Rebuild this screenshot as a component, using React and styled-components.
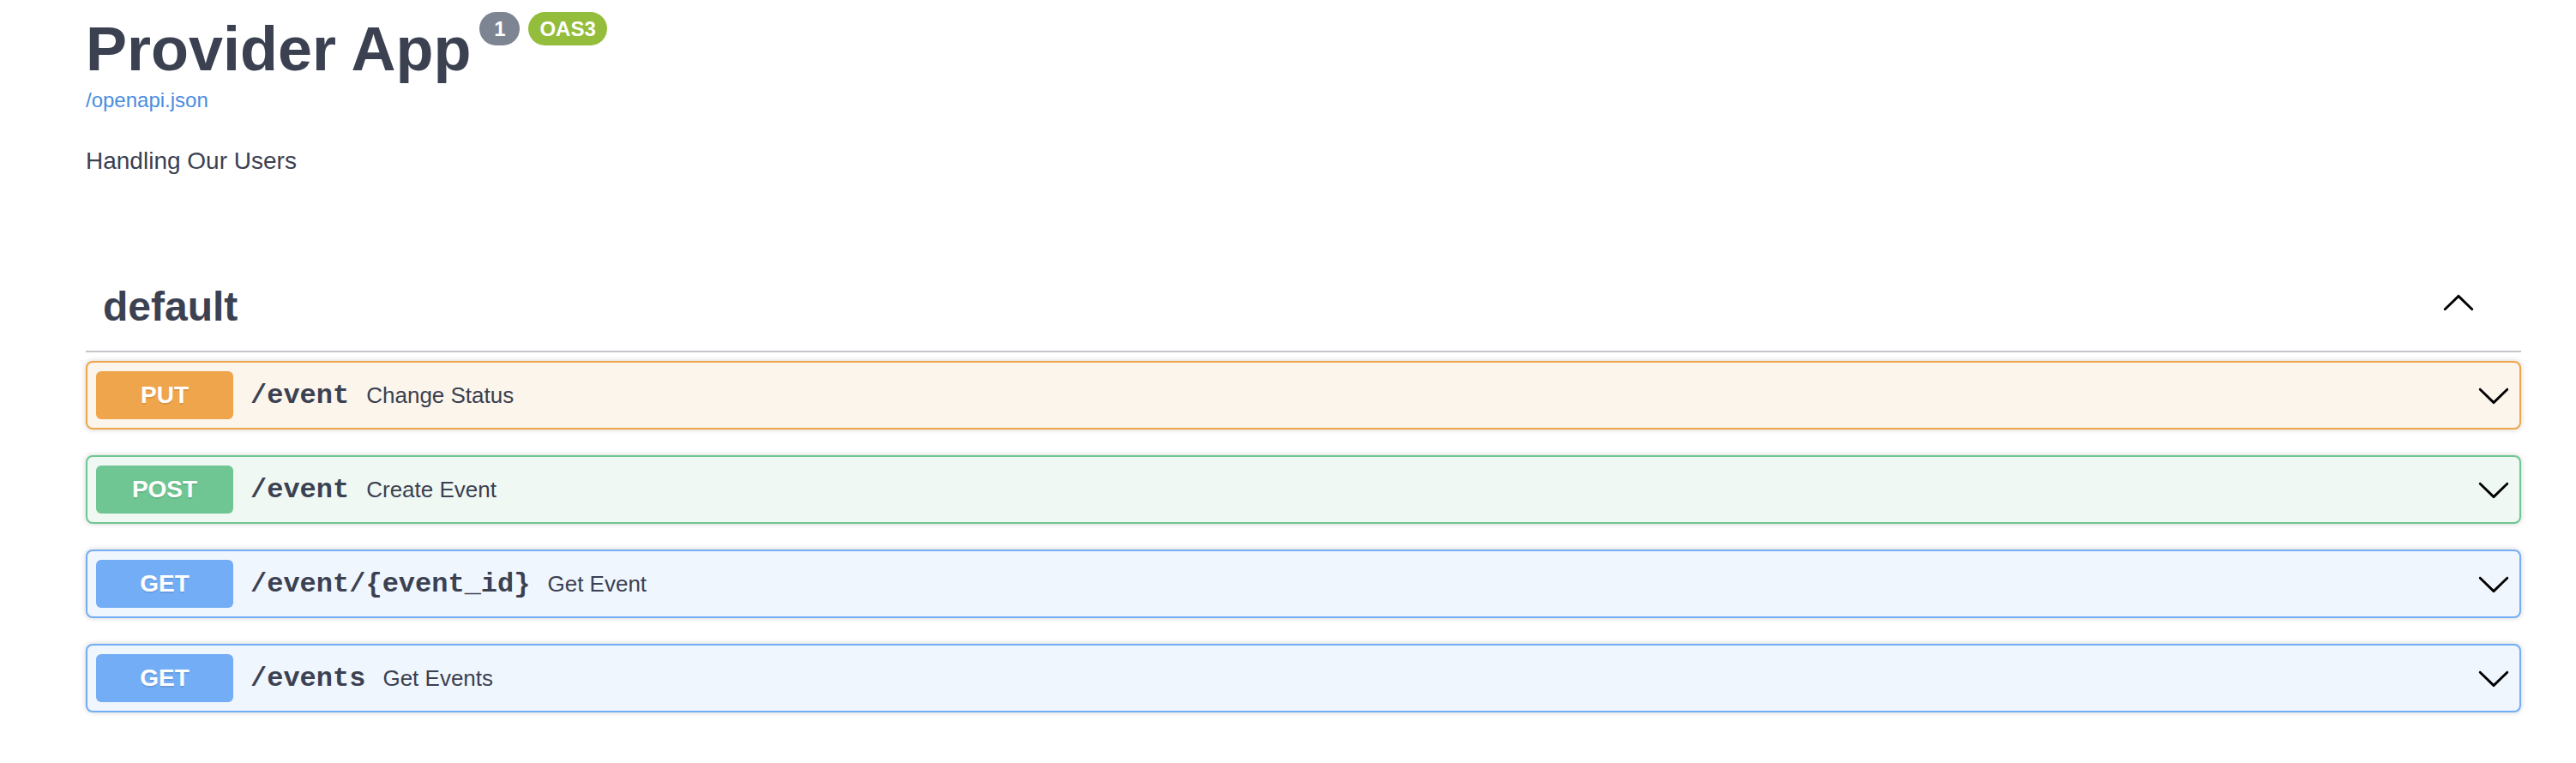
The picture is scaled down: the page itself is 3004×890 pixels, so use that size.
import React from 'react';
import styled, { createGlobalStyle } from 'styled-components';

const GlobalStyle = createGlobalStyle`
  html, body {
    margin: 0;
    padding: 0;
    background: #fff;
  }
  body {
    font-family: "Liberation Sans", Arial, sans-serif;
    color: #3b4151;
  }
`;

const METHODS = {
  PUT: { main: '#efa54b', bg: '#fcf5ec' },
  POST: { main: '#6fc692', bg: '#eff8f3' },
  GET: { main: '#73adf6', bg: '#f0f6fe' },
};

const operations = [
  { method: 'PUT', path: '/event', summary: 'Change Status' },
  { method: 'POST', path: '/event', summary: 'Create Event' },
  { method: 'GET', path: '/event/{event_id}', summary: 'Get Event' },
  { method: 'GET', path: '/events', summary: 'Get Events' },
];

const Page = styled.div`
  padding: 14px 64px 40px 100px;
  width: 2840px;
`;

const Info = styled.div`
  margin-bottom: 105px;
`;

const TitleRow = styled.div`
  display: flex;
  align-items: flex-start;
`;

const Title = styled.h2`
  margin: 2px 0 0 0;
  font-size: 72px;
  line-height: 83px;
  font-weight: 700;
  color: #3b4151;
`;

const Badge = styled.span`
  display: inline-block;
  box-sizing: border-box;
  min-width: 47px;
  height: 39px;
  margin-left: 10px;
  padding: 0 13px;
  border-radius: 57px;
  background: ${({ $color }) => $color};
  color: #fff;
  font-size: 24px;
  font-weight: 700;
  line-height: 39px;
  text-align: center;
`;

const SpecLink = styled.a`
  display: block;
  margin-top: 4px;
  font-size: 24px;
  line-height: 28px;
  color: #4a8de0;
  text-decoration: none;
`;

const Description = styled.p`
  margin: 36px 0 0 0;
  font-size: 28px;
  line-height: 42px;
  color: #3b4151;
`;

const TagHeader = styled.div`
  display: flex;
  align-items: center;
  justify-content: space-between;
  padding: 16px 53px 24px 20px;
  border-bottom: 2px solid #c4c6cb;
  margin-bottom: 10px;
`;

const TagName = styled.h3`
  margin: 0;
  font-size: 48px;
  line-height: 55px;
  font-weight: 700;
  color: #3b4151;
`;

const ArrowButton = styled.span`
  display: flex;
  width: 40px;
  height: 40px;
  margin-top: ${({ $up }) => ($up ? '-8px' : '0')};
`;

const OpBlock = styled.div`
  display: flex;
  align-items: center;
  box-sizing: border-box;
  height: 80px;
  margin-bottom: 30px;
  padding: 10px;
  border: 2px solid ${({ $method }) => METHODS[$method].main};
  border-radius: 8px;
  background: ${({ $method }) => METHODS[$method].bg};
  box-shadow: 0 0 6px rgba(0, 0, 0, 0.19);
`;

const Method = styled.span`
  min-width: 160px;
  padding: 12px 0;
  border-radius: 6px;
  background: ${({ $method }) => METHODS[$method].main};
  color: #fff;
  font-size: 28px;
  line-height: 32px;
  font-weight: 700;
  text-align: center;
  text-shadow: 0 2px 0 rgba(0, 0, 0, 0.1);
`;

const Path = styled.span`
  padding: 0 20px;
  font-family: "Liberation Mono", "Courier New", monospace;
  font-size: 32px;
  font-weight: 700;
  color: #3b4151;
`;

const Summary = styled.span`
  flex: 1 1 auto;
  font-size: 26px;
  color: #3b4151;
`;

const ArrowDown = () => (
  <svg width="40" height="40" viewBox="0 0 20 20">
    <path
      fill="#000"
      d="M17.418 6.109c.272-.268.709-.268.979 0s.271.701 0 .969l-7.908 7.83c-.27.268-.707.268-.979 0l-7.908-7.83c-.27-.268-.27-.701 0-.969.271-.268.709-.268.979 0L10 13.25l7.418-7.141z"
    />
  </svg>
);

const ArrowUp = () => (
  <svg width="40" height="40" viewBox="0 0 20 20">
    <path
      fill="#000"
      d="M17.418 13.891c.272.268.709.268.979 0s.271-.701 0-.969l-7.908-7.83c-.27-.268-.707-.268-.979 0l-7.908 7.83c-.27.268-.27.701 0 .969.271.268.709.268.979 0L10 6.75l7.418 7.141z"
    />
  </svg>
);

export default function App() {
  return (
    <>
      <GlobalStyle />
      <Page>
        <Info>
          <TitleRow>
            <Title>Provider App</Title>
            <Badge $color="#7d8492">1</Badge>
            <Badge $color="#93bd3b">OAS3</Badge>
          </TitleRow>
          <SpecLink href="#">/openapi.json</SpecLink>
          <Description>Handling Our Users</Description>
        </Info>

        <section>
          <TagHeader>
            <TagName>default</TagName>
            <ArrowButton $up>
              <ArrowUp />
            </ArrowButton>
          </TagHeader>
          {operations.map((op, i) => (
            <OpBlock key={i} $method={op.method}>
              <Method $method={op.method}>{op.method}</Method>
              <Path>{op.path}</Path>
              <Summary>{op.summary}</Summary>
              <ArrowButton>
                <ArrowDown />
              </ArrowButton>
            </OpBlock>
          ))}
        </section>
      </Page>
    </>
  );
}
